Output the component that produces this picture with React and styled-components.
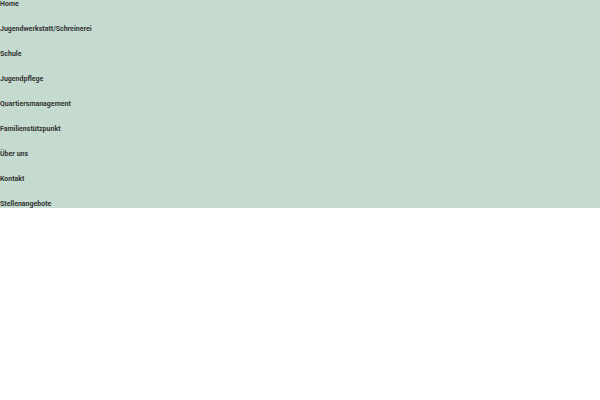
import React from "react";
import styled, { createGlobalStyle } from "styled-components";

const GlobalStyle = createGlobalStyle`
  body {
    margin: 0;
    background: #fff;
    font-family: Roboto, "Noto Sans", sans-serif;
  }
`;

const items = [
  "Home",
  "Jugendwerkstatt/Schreinerei",
  "Schule",
  "Jugendpflege",
  "Quartiersmanagement",
  "Familienstützpunkt",
  "Über uns",
  "Kontakt",
  "Stellenangebote",
];

const App = () => {
  return (
    <>
      <GlobalStyle />
      <Nav>
        {items.map((item) => (
          <NavLink key={item} href="#">
            {item}
          </NavLink>
        ))}
      </Nav>
    </>
  );
};

export default App;

const Nav = styled.nav`
  display: flex;
  flex-direction: column;
  gap: 17px;
  background: #c5dbd0;
`;

const NavLink = styled.a`
  display: block;
  font-size: 7px;
  line-height: 8px;
  font-weight: 700;
  color: #333;
  text-decoration: none;
`;
